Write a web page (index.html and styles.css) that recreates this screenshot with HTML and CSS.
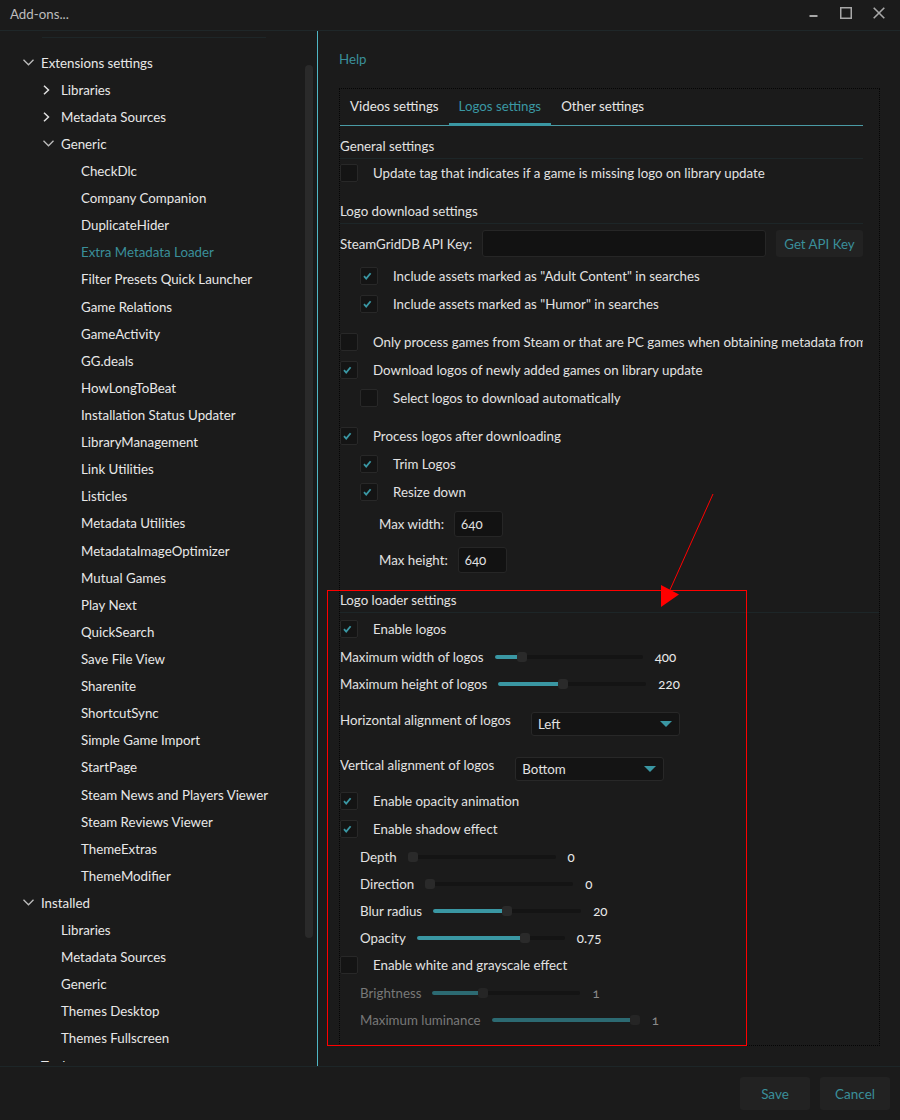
FILE: index.html
```html
<!DOCTYPE html>
<html lang="en">
<head>
<meta charset="utf-8">
<title>Add-ons...</title>
<link rel="stylesheet" href="styles.css">
</head>
<body>
<div class="window">
  <header class="titlebar">
    <span class="title">Add-ons...</span>
    <div class="controls">
      <span class="ctl"><svg width="12" height="12" viewBox="0 0 12 12"><line x1="2.5" y1="9" x2="10.5" y2="9" stroke="#a8a8a8" stroke-width="2"/></svg></span>
      <span class="ctl"><svg width="12" height="12" viewBox="0 0 12 12"><rect x="0.75" y="0.75" width="10.5" height="10.5" fill="none" stroke="#a8a8a8" stroke-width="1.5"/></svg></span>
      <span class="ctl"><svg width="12" height="12" viewBox="0 0 12 12"><path d="M0.7 0.7 L11.3 11.3 M11.3 0.7 L0.7 11.3" stroke="#a8a8a8" stroke-width="1.6"/></svg></span>
    </div>
  </header>

  <div class="main">
    <aside class="sidebar">
      <div class="topline"></div>
      <div class="tree-view">
        <ul class="tree">
          <li class="node l0"><span class="chev"><svg width="11" height="7" viewBox="0 0 11 7"><polyline points="0.5,0.8 5.5,5.8 10.5,0.8" fill="none" stroke="#bdbdbd" stroke-width="1.3"/></svg></span>Extensions settings</li>
          <li class="node l1"><span class="chev"><svg width="7" height="10" viewBox="0 0 7 10"><polyline points="1,0.7 5.5,5 1,9.3" fill="none" stroke="#e0e0e0" stroke-width="1.5"/></svg></span>Libraries</li>
          <li class="node l1"><span class="chev"><svg width="7" height="10" viewBox="0 0 7 10"><polyline points="1,0.7 5.5,5 1,9.3" fill="none" stroke="#e0e0e0" stroke-width="1.5"/></svg></span>Metadata Sources</li>
          <li class="node l1"><span class="chev"><svg width="11" height="7" viewBox="0 0 11 7"><polyline points="0.5,0.8 5.5,5.8 10.5,0.8" fill="none" stroke="#bdbdbd" stroke-width="1.3"/></svg></span>Generic</li>
          <li class="node l2"><span class="chev"></span>CheckDlc</li>
          <li class="node l2"><span class="chev"></span>Company Companion</li>
          <li class="node l2"><span class="chev"></span>DuplicateHider</li>
          <li class="node l2 selected"><span class="chev"></span>Extra Metadata Loader</li>
          <li class="node l2"><span class="chev"></span>Filter Presets Quick Launcher</li>
          <li class="node l2"><span class="chev"></span>Game Relations</li>
          <li class="node l2"><span class="chev"></span>GameActivity</li>
          <li class="node l2"><span class="chev"></span>GG.deals</li>
          <li class="node l2"><span class="chev"></span>HowLongToBeat</li>
          <li class="node l2"><span class="chev"></span>Installation Status Updater</li>
          <li class="node l2"><span class="chev"></span>LibraryManagement</li>
          <li class="node l2"><span class="chev"></span>Link Utilities</li>
          <li class="node l2"><span class="chev"></span>Listicles</li>
          <li class="node l2"><span class="chev"></span>Metadata Utilities</li>
          <li class="node l2"><span class="chev"></span>MetadataImageOptimizer</li>
          <li class="node l2"><span class="chev"></span>Mutual Games</li>
          <li class="node l2"><span class="chev"></span>Play Next</li>
          <li class="node l2"><span class="chev"></span>QuickSearch</li>
          <li class="node l2"><span class="chev"></span>Save File View</li>
          <li class="node l2"><span class="chev"></span>Sharenite</li>
          <li class="node l2"><span class="chev"></span>ShortcutSync</li>
          <li class="node l2"><span class="chev"></span>Simple Game Import</li>
          <li class="node l2"><span class="chev"></span>StartPage</li>
          <li class="node l2"><span class="chev"></span>Steam News and Players Viewer</li>
          <li class="node l2"><span class="chev"></span>Steam Reviews Viewer</li>
          <li class="node l2"><span class="chev"></span>ThemeExtras</li>
          <li class="node l2"><span class="chev"></span>ThemeModifier</li>
          <li class="node l0"><span class="chev"><svg width="11" height="7" viewBox="0 0 11 7"><polyline points="0.5,0.8 5.5,5.8 10.5,0.8" fill="none" stroke="#bdbdbd" stroke-width="1.3"/></svg></span>Installed</li>
          <li class="node l1"><span class="chev"></span>Libraries</li>
          <li class="node l1"><span class="chev"></span>Metadata Sources</li>
          <li class="node l1"><span class="chev"></span>Generic</li>
          <li class="node l1"><span class="chev"></span>Themes Desktop</li>
          <li class="node l1"><span class="chev"></span>Themes Fullscreen</li>
          <li class="node l0"><span class="chev"></span>Tools</li>
        </ul>
      </div>
      <div class="vscroll"></div>
    </aside>

    <section class="content">
      <a class="help">Help</a>
      <div class="frame">
        <nav class="tabs">
          <span class="tab">Videos settings</span>
          <span class="tab active">Logos settings</span>
          <span class="tab">Other settings</span>
        </nav>

        <div class="settings">
          <div class="header h-first">General settings</div>
          <div class="row"><span class="cb"></span><span>Update tag that indicates if a game is missing logo on library update</span></div>

          <div class="header h-second">Logo download settings</div>
          <div class="api-row">
            <span>SteamGridDB API Key:</span>
            <span class="textbox"></span>
            <span class="btn">Get API Key</span>
          </div>
          <div class="group g-api">
            <div class="row indent"><span class="cb on"><svg width="18" height="18" viewBox="0 0 18 18"><polyline points="4,9.2 6.2,11.6 10.6,6.2" fill="none" stroke="#3a97a3" stroke-width="1.8"/></svg></span><span>Include assets marked as "Adult Content" in searches</span></div>
            <div class="row indent"><span class="cb on"><svg width="18" height="18" viewBox="0 0 18 18"><polyline points="4,9.2 6.2,11.6 10.6,6.2" fill="none" stroke="#3a97a3" stroke-width="1.8"/></svg></span><span>Include assets marked as "Humor" in searches</span></div>
          </div>
          <div class="group g-mid">
            <div class="row clip"><span class="cb"></span><span class="nowrap">Only process games from Steam or that are PC games when obtaining metadata from</span></div>
            <div class="row"><span class="cb on"><svg width="18" height="18" viewBox="0 0 18 18"><polyline points="4,9.2 6.2,11.6 10.6,6.2" fill="none" stroke="#3a97a3" stroke-width="1.8"/></svg></span><span>Download logos of newly added games on library update</span></div>
            <div class="row indent"><span class="cb"></span><span>Select logos to download automatically</span></div>
          </div>
          <div class="group g-mid">
            <div class="row"><span class="cb on"><svg width="18" height="18" viewBox="0 0 18 18"><polyline points="4,9.2 6.2,11.6 10.6,6.2" fill="none" stroke="#3a97a3" stroke-width="1.8"/></svg></span><span>Process logos after downloading</span></div>
            <div class="row indent"><span class="cb on"><svg width="18" height="18" viewBox="0 0 18 18"><polyline points="4,9.2 6.2,11.6 10.6,6.2" fill="none" stroke="#3a97a3" stroke-width="1.8"/></svg></span><span>Trim Logos</span></div>
            <div class="row indent"><span class="cb on"><svg width="18" height="18" viewBox="0 0 18 18"><polyline points="4,9.2 6.2,11.6 10.6,6.2" fill="none" stroke="#3a97a3" stroke-width="1.8"/></svg></span><span>Resize down</span></div>
          </div>
          <div class="size-row sr-w"><span>Max width:</span><span class="numbox">640</span></div>
          <div class="size-row sr-h"><span>Max height:</span><span class="numbox">640</span></div>

          <div class="header h-third">Logo loader settings</div>
          <div class="row r-enable"><span class="cb on"><svg width="18" height="18" viewBox="0 0 18 18"><polyline points="4,9.2 6.2,11.6 10.6,6.2" fill="none" stroke="#3a97a3" stroke-width="1.8"/></svg></span><span>Enable logos</span></div>
          <div class="srow"><span>Maximum width of logos</span><div class="slider"><div class="fill" style="width:calc(0.16 * (100% - 10px) + 5px)"></div><div class="thumb" style="left:calc(0.16 * (100% - 10px))"></div></div><span class="val">400</span></div>
          <div class="srow"><span>Maximum height of logos</span><div class="slider"><div class="fill" style="width:calc(0.43 * (100% - 10px) + 5px)"></div><div class="thumb" style="left:calc(0.43 * (100% - 10px))"></div></div><span class="val">220</span></div>

          <div class="combo-row cr-h"><span class="clabel">Horizontal alignment of logos</span><div class="combo"><span>Left</span><svg width="12" height="6" viewBox="0 0 12 6"><polygon points="0,0 12,0 6,6" fill="#3a97a3"/></svg></div></div>
          <div class="combo-row cr-v"><span class="clabel">Vertical alignment of logos</span><div class="combo"><span>Bottom</span><svg width="12" height="6" viewBox="0 0 12 6"><polygon points="0,0 12,0 6,6" fill="#3a97a3"/></svg></div></div>

          <div class="group g-fx">
            <div class="row"><span class="cb on"><svg width="18" height="18" viewBox="0 0 18 18"><polyline points="4,9.2 6.2,11.6 10.6,6.2" fill="none" stroke="#3a97a3" stroke-width="1.8"/></svg></span><span>Enable opacity animation</span></div>
            <div class="row"><span class="cb on"><svg width="18" height="18" viewBox="0 0 18 18"><polyline points="4,9.2 6.2,11.6 10.6,6.2" fill="none" stroke="#3a97a3" stroke-width="1.8"/></svg></span><span>Enable shadow effect</span></div>
          </div>
          <div class="srow indent"><span>Depth</span><div class="slider"><div class="fill" style="width:0"></div><div class="thumb" style="left:0"></div></div><span class="val">0</span></div>
          <div class="srow indent"><span>Direction</span><div class="slider"><div class="fill" style="width:0"></div><div class="thumb" style="left:0"></div></div><span class="val">0</span></div>
          <div class="srow indent"><span>Blur radius</span><div class="slider"><div class="fill" style="width:calc(0.5 * (100% - 10px) + 5px)"></div><div class="thumb" style="left:calc(0.5 * (100% - 10px))"></div></div><span class="val">20</span></div>
          <div class="srow indent"><span>Opacity</span><div class="slider"><div class="fill" style="width:calc(0.75 * (100% - 10px) + 5px)"></div><div class="thumb" style="left:calc(0.75 * (100% - 10px))"></div></div><span class="val">0.75</span></div>
          <div class="row"><span class="cb"></span><span>Enable white and grayscale effect</span></div>
          <div class="srow indent disabled"><span>Brightness</span><div class="slider"><div class="fill" style="width:calc(0.33 * (100% - 10px) + 5px)"></div><div class="thumb" style="left:calc(0.33 * (100% - 10px))"></div></div><span class="val">1</span></div>
          <div class="srow indent disabled"><span>Maximum luminance</span><div class="slider"><div class="fill" style="width:calc(1 * (100% - 10px) + 5px)"></div><div class="thumb" style="left:calc(1 * (100% - 10px))"></div></div><span class="val">1</span></div>
        </div>
      </div>
    </section>
  </div>

  <footer class="footer">
    <span class="btn fbtn">Save</span>
    <span class="btn fbtn">Cancel</span>
  </footer>

  <svg class="annotation" width="900" height="1120" viewBox="0 0 900 1120">
    <rect x="327.5" y="590.5" width="419" height="455" fill="none" stroke="#ff0000" stroke-width="1"/>
    <line x1="713" y1="494" x2="669" y2="592" stroke="#ff0000" stroke-width="1"/>
    <polygon points="661,585 679,594.5 661,607" fill="#ff0000"/>
  </svg>
</div>
</body>
</html>
```

FILE: styles.css
```css
* { box-sizing: border-box; }

html, body {
  margin: 0;
  padding: 0;
  background: #1b1b1b;
}

body {
  font-family: Lato, "Noto Sans", "Liberation Sans", sans-serif;
  font-size: 13.3px;
  color: #e2e2e2;
}

.window {
  position: relative;
  width: 900px;
  height: 1120px;
  display: flex;
  flex-direction: column;
  overflow: hidden;
  background: #1b1b1b;
}

/* title bar */
.titlebar {
  height: 31px;
  flex: none;
  display: flex;
  align-items: center;
  justify-content: space-between;
  border-bottom: 1px solid #1f2729;
  padding-left: 10px;
  padding-right: 5px;
}

.title {
  color: #bdbdbd;
  font-size: 13.3px;
  padding-bottom: 2px;
}

.controls {
  display: flex;
  height: 30px;
}

.ctl {
  width: 33px;
  height: 30px;
  display: flex;
  align-items: center;
  justify-content: center;
  padding-bottom: 4px;
}

/* main area */
.main {
  flex: none;
  height: 1035px;
  display: flex;
}

.sidebar {
  position: relative;
  width: 318px;
  flex: none;
  border-right: 1px solid #4fb6c4;
  display: flex;
  flex-direction: column;
}

.topline {
  margin: 6px 0 0 42px;
  width: 224px;
  height: 1px;
  background: #1e2628;
  flex: none;
}

.tree-view {
  flex: 1 1 0;
  overflow: hidden;
  margin-top: 11px;
  margin-bottom: 4px;
}

.tree {
  list-style: none;
  margin: 0;
  padding: 0;
}

.node {
  height: 27.12px;
  display: flex;
  align-items: center;
  color: #e8e8e8;
  white-space: nowrap;
}

.node.l0 { padding-left: 23px; }
.node.l1 { padding-left: 43px; }
.node.l2 { padding-left: 63px; }

.node.selected { color: #3a8f9a; }

.chev {
  width: 18px;
  flex: none;
  display: flex;
  align-items: center;
}

.vscroll {
  position: absolute;
  left: 305px;
  top: 34px;
  width: 8px;
  height: 873px;
  border-radius: 4px;
  background: #2a2a2a;
}

/* content */
.content {
  flex: 1;
  display: flex;
  flex-direction: column;
  padding: 0 20px 0 21px;
  min-width: 0;
}

.help {
  margin-top: 19px;
  line-height: 18px;
  height: 18px;
  color: #3a8f9a;
  align-self: flex-start;
}

.frame {
  margin-top: 20px;
  margin-bottom: 20px;
  flex: 1;
  border: 1px dotted #050505;
  padding-right: 16px;
  min-width: 0;
  overflow: hidden;
}

.tabs {
  display: flex;
  height: 37px;
  border-bottom: 1px solid #4a9ba5;
}

.tab {
  position: relative;
  padding: 0 10px;
  line-height: 35px;
  color: #e6e6e6;
}

.tab.active { color: #3a97a3; }

.tab.active::after {
  content: "";
  position: absolute;
  left: 0;
  right: 0;
  bottom: -1px;
  height: 3px;
  background: #3a97a3;
}

.settings {
  display: flex;
  flex-direction: column;
}

.header {
  height: 25px;
  line-height: 24px;
  border-bottom: 1px solid #1d2628;
  color: #e2e2e2;
}

.h-first { margin-top: 8px; }
.h-second { margin-top: 12px; }
.h-third { margin-top: 15px; margin-right: -16px; }

.row {
  height: 28px;
  display: flex;
  align-items: center;
  gap: 15px;
  white-space: nowrap;
}

.row.clip { overflow: hidden; }

.row.indent { padding-left: 20px; }

.nowrap { white-space: nowrap; }

.cb {
  width: 18px;
  height: 18px;
  flex: none;
  background: #141414;
  border: 1px solid #282828;
  border-radius: 2px;
  position: relative;
}

.cb svg {
  position: absolute;
  left: -1px;
  top: -1px;
}

.api-row {
  margin-top: 6px;
  height: 27px;
  display: flex;
  align-items: center;
  gap: 10px;
}

.textbox {
  flex: 1;
  height: 27px;
  background: #121212;
  border: 1px solid #262626;
  border-radius: 3px;
}

.btn {
  display: inline-flex;
  align-items: center;
  justify-content: center;
  background: #222222;
  color: #3a8f9a;
  border-radius: 3px;
}

.api-row .btn {
  width: 87px;
  height: 27px;
}

.group { display: flex; flex-direction: column; }
.g-api { margin-top: 5px; }
.g-mid { margin-top: 10px; }
.g-fx { margin-top: 6px; }

.size-row {
  height: 26px;
  display: flex;
  align-items: center;
  gap: 10px;
  padding-left: 39px;
}

.sr-w { margin-top: 5px; }
.sr-h { margin-top: 10px; }

.numbox {
  width: 49px;
  height: 26px;
  background: #121212;
  border: 1px solid #262626;
  border-radius: 3px;
  padding-left: 6px;
  display: flex;
  align-items: center;
  font-variant-numeric: oldstyle-nums;
}

.r-enable { margin-top: 2px; }

.srow {
  height: 27px;
  display: flex;
  align-items: center;
  white-space: nowrap;
}

.srow.indent { padding-left: 20px; }

.slider {
  position: relative;
  width: 148px;
  height: 4px;
  margin-left: 11px;
  margin-right: 12px;
  background: #141414;
  border-radius: 2px;
  flex: none;
}

.fill {
  height: 4px;
  border-radius: 2px;
  background: #3a97a3;
}

.thumb {
  position: absolute;
  top: -3px;
  width: 10px;
  height: 10px;
  border-radius: 3px;
  background: #2a2a2a;
}

.val {
  font-variant-numeric: oldstyle-nums;
  color: #e8e8e8;
}

.srow.disabled { color: #787878; }
.srow.disabled .fill { background: #2c6a72; }
.srow.disabled .thumb { background: #252525; }
.srow.disabled .val { color: #8a8a8a; }

.combo-row {
  display: flex;
  align-items: flex-start;
  height: 24px;
}

.cr-h { margin-top: 15px; gap: 20px; }
.cr-v { margin-top: 21px; gap: 21px; }

.clabel {
  line-height: 16px;
}

.combo {
  width: 149px;
  height: 24px;
  background: #141414;
  border: 1px solid #282828;
  border-radius: 3px;
  display: flex;
  align-items: center;
  justify-content: space-between;
  padding: 0 7px 0 6px;
}

/* footer */
.footer {
  flex: none;
  height: 54px;
  border-top: 1px solid #1d2628;
  display: flex;
  justify-content: flex-end;
  align-items: flex-start;
  gap: 10px;
  padding: 10px 10px 0 0;
}

.fbtn {
  width: 70px;
  height: 33px;
  font-size: 13.5px;
}

.annotation {
  position: absolute;
  left: 0;
  top: 0;
  pointer-events: none;
}
```
